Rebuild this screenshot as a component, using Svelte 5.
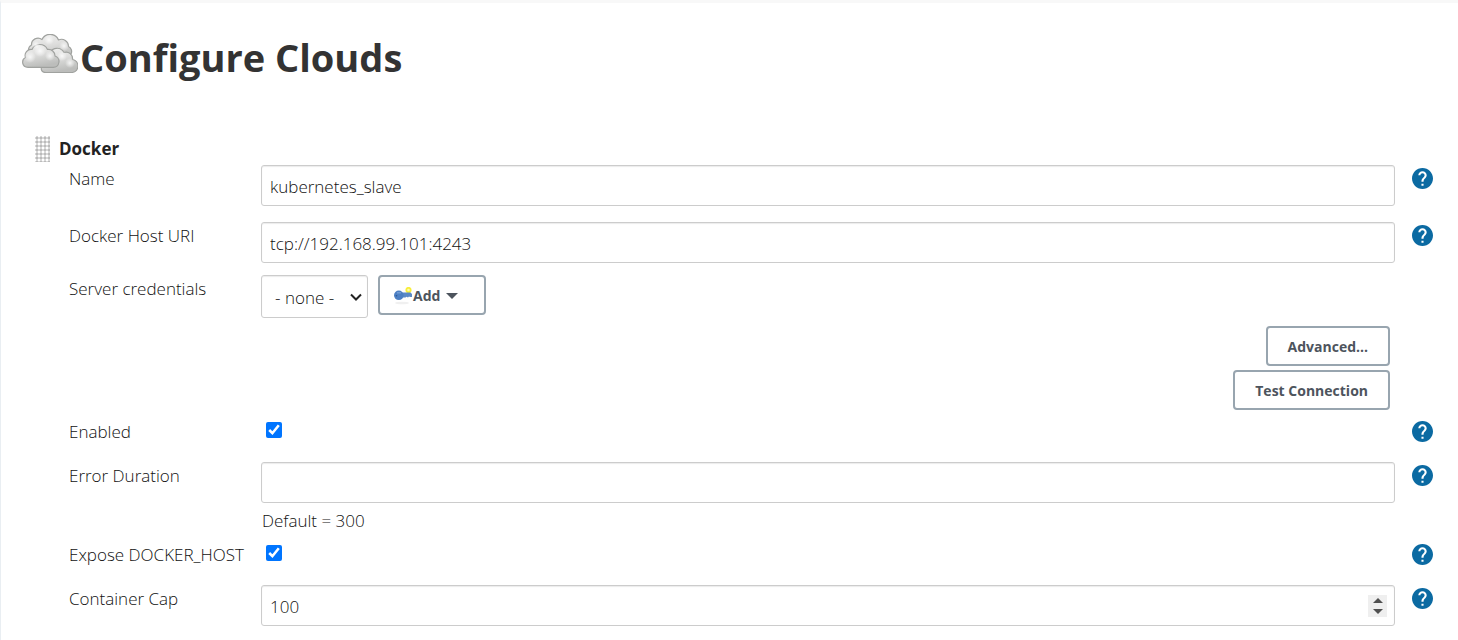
<script>
  let name = $state('kubernetes_slave');
  let uri = $state('tcp://192.168.99.101:4243');
  let credentials = $state('none');
  let enabled = $state(true);
  let errorDuration = $state('');
  let exposeHost = $state(true);
  let containerCap = $state(100);
</script>

{#snippet help(topic)}
  <button type="button" class="help" aria-label={`Help for feature: ${topic}`}>
    <svg viewBox="2 2 20 20" aria-hidden="true">
      <path d="M12 2C6.48 2 2 6.48 2 12s4.48 10 10 10 10-4.48 10-10S17.52 2 12 2zm1 17h-2v-2h2v2zm2.07-7.75l-.9.92C13.45 12.9 13 13.5 13 15h-2v-.5c0-1.1.45-2.1 1.17-2.83l1.24-1.26c.37-.36.59-.86.59-1.41 0-1.1-.9-2-2-2s-2 .9-2 2H8c0-2.21 1.79-4 4-4s4 1.79 4 4c0 .88-.36 1.68-.93 2.25z" />
    </svg>
  </button>
{/snippet}

<main>
  <h1>
    <svg class="clouds" viewBox="0 0 56 40" aria-hidden="true">
      <defs>
        <linearGradient id="fill" x1="0" y1="0" x2="0.3" y2="1">
          <stop offset="0" stop-color="#f2f2f1" />
          <stop offset="0.5" stop-color="#dededd" />
          <stop offset="1" stop-color="#bcbdbb" />
        </linearGradient>
        <radialGradient id="puff">
          <stop offset="0" stop-color="#fff" stop-opacity="0.8" />
          <stop offset="1" stop-color="#fff" stop-opacity="0" />
        </radialGradient>
      </defs>
      <g fill="url(#fill)" stroke="#a0a29f" stroke-width="1.2" stroke-linejoin="round">
        <path d="M10 21A5.5 5.5 0 0 1 9.500 11A6.500 6.500 0 0 1 20 5.500A9 9 0 0 1 36.500 6A7 7 0 0 1 46.500 12.500A5.500 5.500 0 0 1 49 20L45 26H13Z" />
        <path d="M24 38.500C18.500 38.500 18 33.500 21.500 30.500A6 6 0 0 1 27 23A8 8 0 0 1 42 18.500A6.500 6.500 0 0 1 50.500 25.500A6.600 6.600 0 0 1 50.500 38.500Z" />
        <path d="M6 33.300C-.5 33.300-.7 25.500 3.500 23.500A6 6 0 0 1 10 15.500A8.500 8.500 0 0 1 25.500 15.500A6.500 6.500 0 0 1 33 22A5.800 5.800 0 0 1 31 33.300Z" />
      </g>
      <g fill="url(#puff)">
        <circle cx="27" cy="6" r="5" /><circle cx="14" cy="11" r="4" /><circle cx="42" cy="12" r="5" />
        <circle cx="18" cy="17" r="6" /><circle cx="8" cy="23" r="6" /><circle cx="28" cy="22" r="5" />
        <circle cx="40" cy="22" r="5" /><circle cx="48" cy="29" r="5" />
      </g>
    </svg>
    <span>Configure Clouds</span>
  </h1>

  <form onsubmit={(e) => e.preventDefault()}>
    <div class="section">
      <span class="grip" aria-hidden="true"></span>
      <h2>Docker</h2>
    </div>

    <div class="row">
      <label for="name">Name</label>
      <input id="name" class="field" type="text" bind:value={name} />
      {@render help('Name')}
    </div>

    <div class="row tight">
      <label for="uri">Docker Host URI</label>
      <input id="uri" class="field" type="text" bind:value={uri} />
      {@render help('Docker Host URI')}
    </div>

    <div class="row compact">
      <label for="credentials">Server credentials</label>
      <div class="inline">
        <div class="picker">
          <select id="credentials" bind:value={credentials}>
            <option value="none">- none -</option>
          </select>
          <svg class="chevron" viewBox="0 0 12 8" aria-hidden="true">
            <path d="M1 1.500L6 6.500L11 1.500" fill="none" stroke="#222" stroke-width="2" />
          </svg>
        </div>
        <button type="button" class="btn add">
          <svg class="key" viewBox="0 0 20 18" aria-hidden="true">
            <ellipse cx="9" cy="16" rx="7" ry="1.300" fill="#f0f0f0" />
            <circle cx="15.500" cy="3" r="2.200" fill="#fffbb0" stroke="#f8ee3c" stroke-width="1.800" />
            <path d="M9 5.500H17.500L19 7V10H17L16 9.500L15 10.500L13.500 9.800L12.500 10.500H9Z" fill="#5b89c6" />
            <ellipse cx="5.800" cy="8.300" rx="4.800" ry="4.800" fill="#4c7fc3" />
            <path d="M4 5.800H8" stroke="#7ba3d8" stroke-width="1.200" />
            <circle cx="3.500" cy="8.800" r=".8" fill="#2d568f" />
          </svg>
          <span>Add</span>
          <svg class="caret" viewBox="0 0 12 6" aria-hidden="true"><path d="M0 0H12L6 6Z" /></svg>
        </button>
      </div>
    </div>

    <div class="actions">
      <button type="button" class="btn">Advanced...</button>
      <button type="button" class="btn">Test Connection</button>
    </div>

    <div class="row">
      <label for="enabled">Enabled</label>
      <div class="tick"><input id="enabled" type="checkbox" bind:checked={enabled} /></div>
      {@render help('Enabled')}
    </div>

    <div class="row flush">
      <label for="duration">Error Duration</label>
      <div class="stack">
        <input id="duration" class="field" type="text" aria-describedby="duration-note" bind:value={errorDuration} />
        <div id="duration-note" class="note">Default = 300</div>
      </div>
      {@render help('Error Duration')}
    </div>

    <div class="row">
      <label for="expose">Expose DOCKER_HOST</label>
      <div class="tick"><input id="expose" type="checkbox" bind:checked={exposeHost} /></div>
      {@render help('Expose DOCKER_HOST')}
    </div>

    <div class="row last">
      <label for="cap">Container Cap</label>
      <div class="number">
        <input id="cap" class="field" type="number" bind:value={containerCap} />
        <div class="stepper">
          <button type="button" aria-label="Increase Container Cap" onclick={() => containerCap++}>
            <svg viewBox="0 0 10 5" aria-hidden="true"><path d="M0 5H10L5 0Z" /></svg>
          </button>
          <button type="button" aria-label="Decrease Container Cap" onclick={() => containerCap--}>
            <svg viewBox="0 0 10 5" aria-hidden="true"><path d="M0 0H10L5 5Z" /></svg>
          </button>
        </div>
      </div>
      {@render help('Container Cap')}
    </div>
  </form>
</main>

<style>
  :global(body) {
    margin: 0;
    background: #fff;
  }

  main {
    box-sizing: border-box;
    min-height: 100vh;
    padding: 24px 25px 14px 21px;
    border-top: 3px solid #f8f8f8;
    border-left: 1px solid #e9eef2;
    color: #111;
    font: 300 17px/28px 'Open Sans', 'Noto Sans', sans-serif;
  }

  h1,
  h2 {
    margin: 0;
    font-weight: 700;
  }

  h1 {
    display: flex;
    align-items: center;
    gap: 2px;
    height: 60px;
    color: #333;
    font-size: 38px;
    line-height: 60px;
  }

  .clouds {
    width: 56px;
    height: 40px;
    padding-bottom: 6px;
  }

  form {
    margin-top: 47px;
    padding-left: 13px;
  }

  .section {
    display: flex;
    align-items: center;
    gap: 9px;
    height: 30px;
    margin-bottom: 1px;
    color: #222;
  }

  h2 {
    font-size: 17px;
  }

  .grip {
    width: 15px;
    height: 26px;
    background: radial-gradient(circle at 2px 2px, #bbb 1px, #eee 2px, #fff 2px) 0 0 / 4px 4px;
  }

  .row {
    display: grid;
    grid-template-columns: 192px minmax(0, 1fr) 21px;
    align-items: start;
    margin-bottom: 16px;
    padding-left: 34px;
  }

  .row.tight {
    margin-bottom: 12px;
  }

  .row.compact {
    margin-bottom: 8px;
  }

  .row.flush {
    margin-bottom: 6px;
  }

  .row.last {
    margin-bottom: 0;
  }

  .row > :nth-child(2) {
    margin-right: 17px;
  }

  .field,
  select {
    box-sizing: border-box;
    border: 1px solid #ccc;
    border-radius: 3px;
    background: #fff;
    box-shadow: inset 0 1px 1px rgba(0, 0, 0, 0.08);
    color: #111;
    font: inherit;
  }

  .field {
    width: 100%;
    height: 41px;
    padding: 2px 7px 0 8px;
  }

  .row > .field {
    width: auto;
  }

  .number {
    display: grid;
    align-items: center;
  }

  .number > * {
    grid-area: 1 / 1;
  }

  input[type='number'] {
    appearance: textfield;
  }

  input[type='number']::-webkit-inner-spin-button {
    display: none;
  }

  .stepper {
    display: grid;
    justify-self: end;
    width: 19px;
    height: 22px;
    margin-right: 8px;
    background: #efefef;
  }

  .stepper button {
    display: flex;
    align-items: center;
    justify-content: center;
    padding: 0;
    border: 0;
    background: none;
  }

  .stepper svg {
    width: 10px;
    height: 5px;
    fill: #505050;
  }

  .help {
    display: flex;
    align-items: center;
    height: 27px;
    padding: 0;
    border: 0;
    background: none;
    cursor: pointer;
  }

  .help svg {
    width: 21px;
    height: 21px;
    fill: #0b6aa2;
  }

  .inline {
    display: flex;
    align-items: start;
    gap: 10px;
  }

  .picker {
    display: grid;
    align-items: center;
  }

  .picker > * {
    grid-area: 1 / 1;
  }

  select {
    appearance: none;
    width: 107px;
    height: 43px;
    padding: 2px 28px 0 13px;
  }

  .chevron {
    justify-self: end;
    width: 12px;
    height: 8px;
    margin-right: 6px;
    pointer-events: none;
  }

  .btn {
    box-sizing: border-box;
    height: 40px;
    padding: 2px 20px 0;
    border: 2px solid #98a5af;
    border-radius: 4px;
    background: #fff;
    color: #4d545d;
    font: 700 14px/20px 'Open Sans', 'Noto Sans', sans-serif;
    cursor: pointer;
  }

  .add {
    display: flex;
    align-items: center;
    padding: 2px 26px 0 13px;
  }

  .key {
    width: 20px;
    height: 18px;
  }

  .caret {
    width: 12px;
    height: 6px;
    margin-left: 6px;
    fill: #4d545d;
  }

  .actions {
    display: flex;
    flex-direction: column;
    align-items: flex-end;
    gap: 4px;
    margin-bottom: 8px;
    padding-right: 43px;
  }

  .tick {
    display: flex;
    align-items: center;
    height: 24px;
    padding-left: 5px;
  }

  .tick input {
    width: 16px;
    height: 16px;
    margin: 0;
  }

  .note {
    margin-top: 4px;
    padding-left: 1px;
  }
</style>
